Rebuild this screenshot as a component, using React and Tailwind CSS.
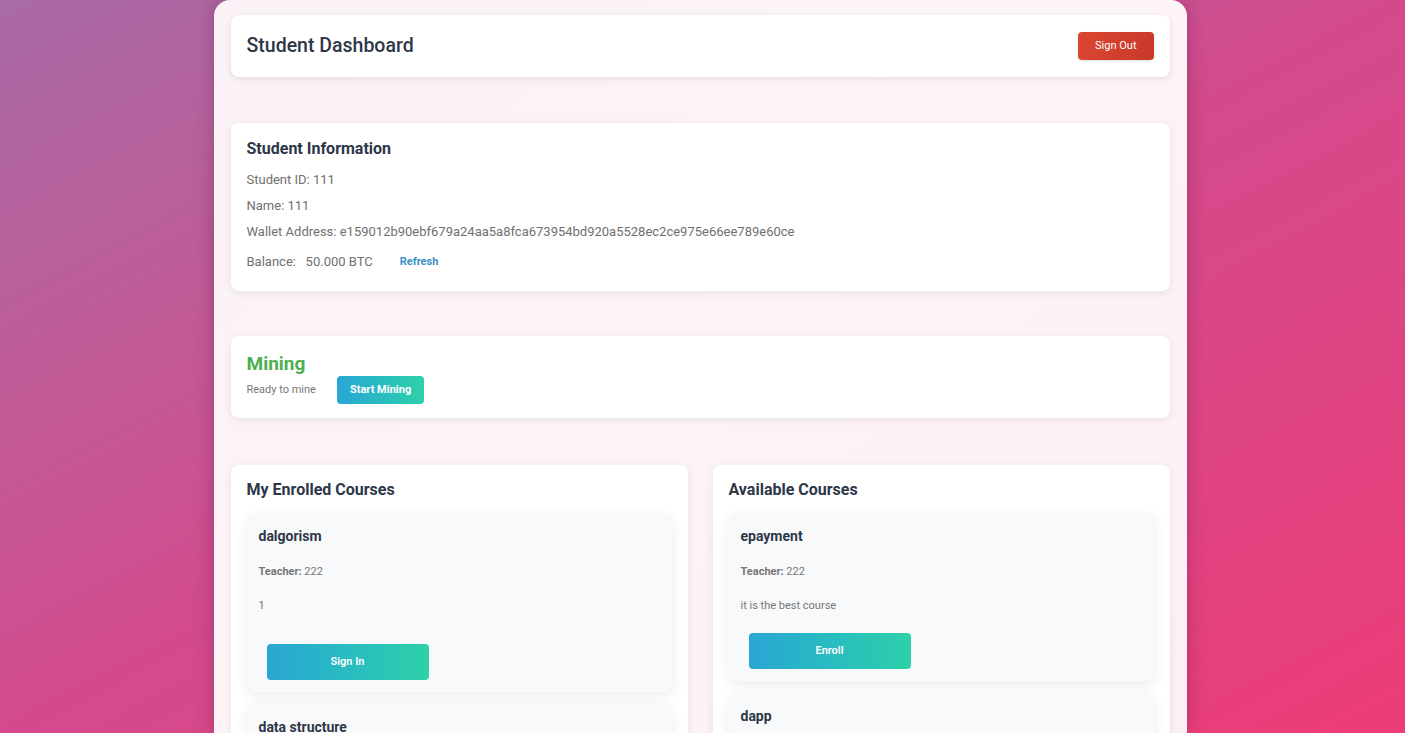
import React from 'react';

const enrolled = [
  { name: 'dalgorism', teacher: '222', desc: '1', action: 'Sign In' },
  { name: 'data structure', teacher: '222', desc: '', action: 'Sign In' },
];

const available = [
  { name: 'epayment', teacher: '222', desc: 'it is the best course', action: 'Enroll' },
  { name: 'dapp', teacher: '222', desc: '', action: 'Enroll' },
];

function CourseCard({ course, tall }) {
  return (
    <div className="bg-[#f8f9fb] rounded-lg shadow-[0_4px_14px_rgba(0,0,0,0.08)] px-3 pt-[13px] pb-3">
      <h4 className="text-[14px] font-bold text-[#2d3748] leading-5">{course.name}</h4>
      <p className="text-[11px] text-[#777] mt-[18px] leading-4">
        <span className="font-bold">Teacher:</span> {course.teacher}
      </p>
      <p className={`text-[11px] text-[#777] leading-4 mt-[18px] ${tall ? 'mb-[30px]' : 'mb-[19px]'}`}>{course.desc}</p>
      <button className="ml-[8px] w-[162px] h-[36px] rounded-[4px] bg-gradient-to-r from-[#2aa6d4] to-[#2ed0a8] text-white text-[11px] font-semibold">
        {course.action}
      </button>
    </div>
  );
}

function CoursePanel({ title, courses, tallFirst }) {
  return (
    <div className="bg-white rounded-lg shadow-[0_2px_8px_rgba(0,0,0,0.08)] px-4 pt-[15px] pb-4 h-[290px] overflow-hidden">
      <h3 className="text-[16px] font-bold text-[#2d3748] leading-5 mb-[13px]">{title}</h3>
      <div className="flex flex-col gap-3">
        {courses.map((c, i) => (
          <CourseCard key={i} course={c} tall={tallFirst && i === 0} />
        ))}
      </div>
    </div>
  );
}

function App() {
  return (
    <div
      className="min-h-screen h-[733px] overflow-hidden bg-gradient-to-br from-[#a86aa5] via-[#d34a8c] to-[#ec3c78] flex justify-center"
      style={{ fontFamily: 'Roboto, "Liberation Sans", sans-serif' }}
    >
      <div className="w-[973px] ml-[-5px] bg-gradient-to-br from-[#fbf2f7] via-[#fdf4f7] to-[#fcf0f4] rounded-t-2xl shadow-[0_0_18px_rgba(80,20,60,0.35)] px-[17px] pt-[15px]">
        {/* Header */}
        <div className="bg-white rounded-lg shadow-[0_2px_6px_rgba(0,0,0,0.1)] h-[62px] flex items-center justify-between px-4">
          <h1 className="text-[19.5px] font-medium text-[#2d3748]">Student Dashboard</h1>
          <button className="bg-gradient-to-r from-[#d9452f] to-[#c93a2c] text-white text-[11px] px-[17px] h-[28px] rounded-[4px] shadow-sm">
            Sign Out
          </button>
        </div>

        {/* Student Information */}
        <div className="mt-[46px] bg-white rounded-lg shadow-[0_2px_8px_rgba(0,0,0,0.08)] px-4 pt-[16px] pb-[21px]">
          <h2 className="text-[16px] font-bold text-[#2d3748] leading-5">Student Information</h2>
          <div className="text-[13px] text-[#707070] mt-[13px] flex flex-col gap-[10px] leading-4">
            <p>Student ID: 111</p>
            <p>Name: 111</p>
            <p>Wallet Address: e159012b90ebf679a24aa5a8fca673954bd920a5528ec2ce975e66ee789e60ce</p>
            <p className="mt-[4px] flex items-center">
              <span>Balance:&nbsp;&nbsp; 50.000 BTC</span>
              <span className="ml-[27px] text-[11px] font-bold text-[#3a8fc4]">Refresh</span>
            </p>
          </div>
        </div>

        {/* Mining */}
        <div className="mt-[45px] bg-white rounded-lg shadow-[0_2px_8px_rgba(0,0,0,0.08)] h-[82px] px-4 pt-[16px]">
          <h2 className="text-[19px] font-bold text-[#4caf50] leading-6">Mining</h2>
          <div className="flex items-center gap-[21px]">
            <span className="text-[11px] text-[#777]">Ready to mine</span>
            <button className="h-[28px] px-[13px] rounded-[4px] bg-gradient-to-r from-[#2aa6d4] to-[#2ed0a8] text-white text-[11px] font-bold">
              Start Mining
            </button>
          </div>
        </div>

        {/* Courses */}
        <div className="mt-[47px] grid grid-cols-2 gap-[25px]">
          <CoursePanel title="My Enrolled Courses" courses={enrolled} tallFirst />
          <CoursePanel title="Available Courses" courses={available} />
        </div>
      </div>
    </div>
  );
}

export default App;
